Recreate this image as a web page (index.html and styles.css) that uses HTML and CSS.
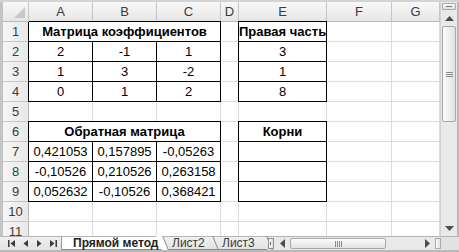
FILE: index.html
```html
<!DOCTYPE html>
<html lang="ru">
<head>
    <meta charset="UTF-8">
    <title>Прямой метод</title>
    <link rel="stylesheet" href="styles.css">
</head>
<body>
    <div class="window">
        <div class="main">
            <div class="sheet">
                <div class="hd corner"></div>
                <div class="hd">A</div>
                <div class="hd">B</div>
                <div class="hd">C</div>
                <div class="hd">D</div>
                <div class="hd">E</div>
                <div class="hd">F</div>
                <div class="hd">G</div>

                <div class="rh">1</div>
                <div class="box bold span3">Матрица коэффициентов</div>
                <div></div>
                <div class="box bold">Правая часть</div>
                <div></div><div></div>

                <div class="rh">2</div>
                <div class="box">2</div><div class="box">-1</div><div class="box">1</div>
                <div></div>
                <div class="box">3</div>
                <div></div><div></div>

                <div class="rh">3</div>
                <div class="box">1</div><div class="box">3</div><div class="box">-2</div>
                <div></div>
                <div class="box">1</div>
                <div></div><div></div>

                <div class="rh">4</div>
                <div class="box">0</div><div class="box">1</div><div class="box">2</div>
                <div></div>
                <div class="box">8</div>
                <div></div><div></div>

                <div class="rh">5</div>
                <div></div><div></div><div></div><div></div><div></div><div></div><div></div>

                <div class="rh">6</div>
                <div class="box bold span3">Обратная матрица</div>
                <div></div>
                <div class="box bold">Корни</div>
                <div></div><div></div>

                <div class="rh">7</div>
                <div class="box">0,421053</div><div class="box">0,157895</div><div class="box">-0,05263</div>
                <div></div>
                <div class="box"></div>
                <div></div><div></div>

                <div class="rh">8</div>
                <div class="box">-0,10526</div><div class="box">0,210526</div><div class="box">0,263158</div>
                <div></div>
                <div class="box"></div>
                <div></div><div></div>

                <div class="rh">9</div>
                <div class="box">0,052632</div><div class="box">-0,10526</div><div class="box">0,368421</div>
                <div></div>
                <div class="box"></div>
                <div></div><div></div>

                <div class="rh">10</div>
                <div></div><div></div><div></div><div></div><div></div><div></div><div></div>

                <div class="rh">11</div>
                <div></div><div></div><div></div><div></div><div></div><div></div><div></div>
            </div>
            <div class="vscroll">
                <div class="split"></div>
                <div class="sbtn">
                    <svg width="9" height="5" viewBox="0 0 9 5"><path d="M0 5 L4.5 0 L9 5 Z" fill="#4d4d4d"/></svg>
                </div>
                <div class="vthumb"><span class="vgrip"></span></div>
                <div class="track"></div>
                <div class="sbtn">
                    <svg width="9" height="5" viewBox="0 0 9 5"><path d="M0 0 L9 0 L4.5 5 Z" fill="#4d4d4d"/></svg>
                </div>
            </div>
            <div class="edge"></div>
        </div>
        <div class="tabbar">
            <div class="nav">
                <span class="nbtn"><svg width="7" height="7" viewBox="0 0 7 7"><path d="M0 0h1.5v7H0z M7 0 L2.5 3.5 L7 7 Z" fill="#3c3c3c"/></svg></span>
                <span class="nbtn"><svg width="5" height="7" viewBox="0 0 5 7"><path d="M5 0 L0.5 3.5 L5 7 Z" fill="#3c3c3c"/></svg></span>
                <span class="nbtn"><svg width="5" height="7" viewBox="0 0 5 7"><path d="M0 0 L4.5 3.5 L0 7 Z" fill="#3c3c3c"/></svg></span>
                <span class="nbtn"><svg width="7" height="7" viewBox="0 0 7 7"><path d="M0 0 L4.5 3.5 L0 7 Z M5.5 0H7v7H5.5z" fill="#3c3c3c"/></svg></span>
            </div>
            <div class="tab active">Прямой метод</div>
            <div class="tab">Лист2</div>
            <div class="tab">Лист3</div>
            <div class="hsplit"></div>
            <div class="hscroll">
                <div class="sbtn wide">
                    <svg width="5" height="9" viewBox="0 0 5 9"><path d="M5 0 L0 4.5 L5 9 Z" fill="#4d4d4d"/></svg>
                </div>
                <div class="hthumb"><span class="hgrip"></span></div>
                <div class="track"></div>
                <div class="sbtn wide">
                    <svg width="5" height="9" viewBox="0 0 5 9"><path d="M0 0 L5 4.5 L0 9 Z" fill="#4d4d4d"/></svg>
                </div>
                <div class="hend"></div>
            </div>
            <div class="filler"></div>
        </div>
    </div>
</body>
</html>
```

FILE: styles.css
```css
* {
    box-sizing: border-box;
}

body {
    margin: 0;
    width: 459px;
    height: 252px;
    overflow: hidden;
    background-color: #fff;
    font-family: "Liberation Sans", Arial, sans-serif;
}

.window {
    display: flex;
    flex-direction: column;
    height: 252px;
    border-top: 2px solid #d4d4d4;
}

.main {
    display: flex;
    flex: none;
    height: 234px;
    border-left: 3px solid #c4c4c4;
}

/* table of cells */
.sheet {
    display: grid;
    grid-template-columns: 26px 64px 64px 64px 18px 88px 65px 48px;
    grid-auto-rows: 20px;
    align-content: start;
    width: 437px;
    overflow: hidden;
}

.sheet > div {
    border-right: 1px solid #dadcdd;
    border-bottom: 1px solid #dadcdd;
    font-size: 13px;
    line-height: 20px;
    text-align: center;
    white-space: nowrap;
    overflow: hidden;
    color: #000;
}

.sheet > .hd {
    background: linear-gradient(#f8f8f8, #e6e6e6);
    border-right-color: #c6c6c6;
    border-bottom-color: #b8b8b8;
    color: #3b3b3b;
}

.sheet > .rh {
    background: linear-gradient(to right, #f6f6f6, #e8e8e8);
    border-right-color: #b8b8b8;
    border-bottom-color: #c6c6c6;
    color: #3b3b3b;
}

.corner {
    position: relative;
}

.corner::after {
    content: "";
    position: absolute;
    right: 3px;
    bottom: 3px;
    border-left: 11px solid transparent;
    border-bottom: 11px solid #c8c8c8;
}

.sheet > .box {
    border-right-color: #000;
    border-bottom-color: #000;
    box-shadow: 0 -1px 0 #000, -1px 0 0 #000, -1px -1px 0 #000;
}

.bold {
    font-weight: bold;
}

.span3 {
    grid-column: span 3;
}

/* vertical scroll bar */
.vscroll {
    display: flex;
    flex-direction: column;
    width: 17px;
    background-color: #e9e9e9;
    border-left: 1px solid #d2d2d2;
}

.split {
    height: 7px;
    margin: 1px 1px 1px;
    border: 1px solid #a9a9a9;
    border-radius: 1px;
    background: linear-gradient(#fafafa, #dedede);
    position: relative;
}

.split::after {
    content: "";
    position: absolute;
    left: 3px;
    right: 3px;
    top: 2px;
    border-top: 1px solid #777;
}

.sbtn {
    height: 15px;
    display: flex;
    align-items: center;
    justify-content: center;
}

.vthumb {
    height: 96px;
    margin: 0 1px;
    border: 1px solid #a8a8a8;
    border-radius: 2px;
    background: linear-gradient(to right, #fbfbfb, #e2e2e2);
    display: flex;
    align-items: center;
    justify-content: center;
}

.vgrip {
    width: 7px;
    height: 5px;
    border-top: 1px solid #8c8c8c;
    border-bottom: 1px solid #8c8c8c;
    background: linear-gradient(#8c8c8c, #8c8c8c) center / 100% 1px no-repeat;
}

.track {
    flex: 1;
}

.edge {
    width: 2px;
    background-color: #b9b9b9;
}

/* sheet tabs */
.tabbar {
    display: flex;
    flex: none;
    height: 16px;
    background: linear-gradient(#f0f0f0, #e2e2e2);
    border-top: 1px solid #b4b4b4;
    border-bottom: 2px solid #b9b9b9;
    font-size: 12px;
    white-space: nowrap;
}

.nav {
    display: flex;
    flex: none;
    padding-left: 4px;
    width: 62px;
    border-right: 1px solid #9a9a9a;
}

.nbtn {
    width: 14px;
    display: flex;
    align-items: center;
    justify-content: center;
}

.tab {
    position: relative;
    flex: none;
    padding: 0 0 0 9px;
    line-height: 13px;
    color: #3a3a3a;
    border-bottom: 1px solid #8a8a8a;
}

.tab::after {
    content: "";
    position: absolute;
    top: -1px;
    bottom: -1px;
    right: -3px;
    width: 6px;
    border-right: 1px solid #8a8a8a;
    transform: skewX(22deg);
}

.tab.active {
    background-color: #fff;
    font-weight: bold;
    color: #222;
    width: 101px;
    padding-left: 11px;
}

.tab.active::after {
    background-color: #fff;
    z-index: 1;
}

.tab:nth-child(3) {
    width: 50px;
}

.tab:nth-child(4) {
    width: 54px;
}

.hsplit {
    flex: none;
    width: 6px;
    margin: 1px 0 1px 1px;
    border: 1px solid #8f8f8f;
    background: linear-gradient(to right, #fafafa, #dedede);
    position: relative;
}

.hsplit::after {
    content: "";
    position: absolute;
    top: 3px;
    bottom: 3px;
    left: 1px;
    border-left: 1px solid #666;
}

.hscroll {
    display: flex;
    flex: none;
    width: 167px;
    background-color: #e9e9e9;
}

.sbtn.wide {
    width: 16px;
    height: auto;
}

.hthumb {
    width: 96px;
    margin: 1px 0;
    border: 1px solid #a8a8a8;
    border-radius: 2px;
    background: linear-gradient(#fbfbfb, #e2e2e2);
    display: flex;
    align-items: center;
    justify-content: center;
}

.hgrip {
    width: 7px;
    height: 6px;
    background: repeating-linear-gradient(to right, #8c8c8c 0 1px, transparent 1px 2px);
}

.hend {
    width: 6px;
    margin: 1px 0;
    border: 1px solid #a9a9a9;
    background: linear-gradient(to right, #fafafa, #dedede);
}

.filler {
    flex: 1;
    background-color: #e2e2e2;
}
```
